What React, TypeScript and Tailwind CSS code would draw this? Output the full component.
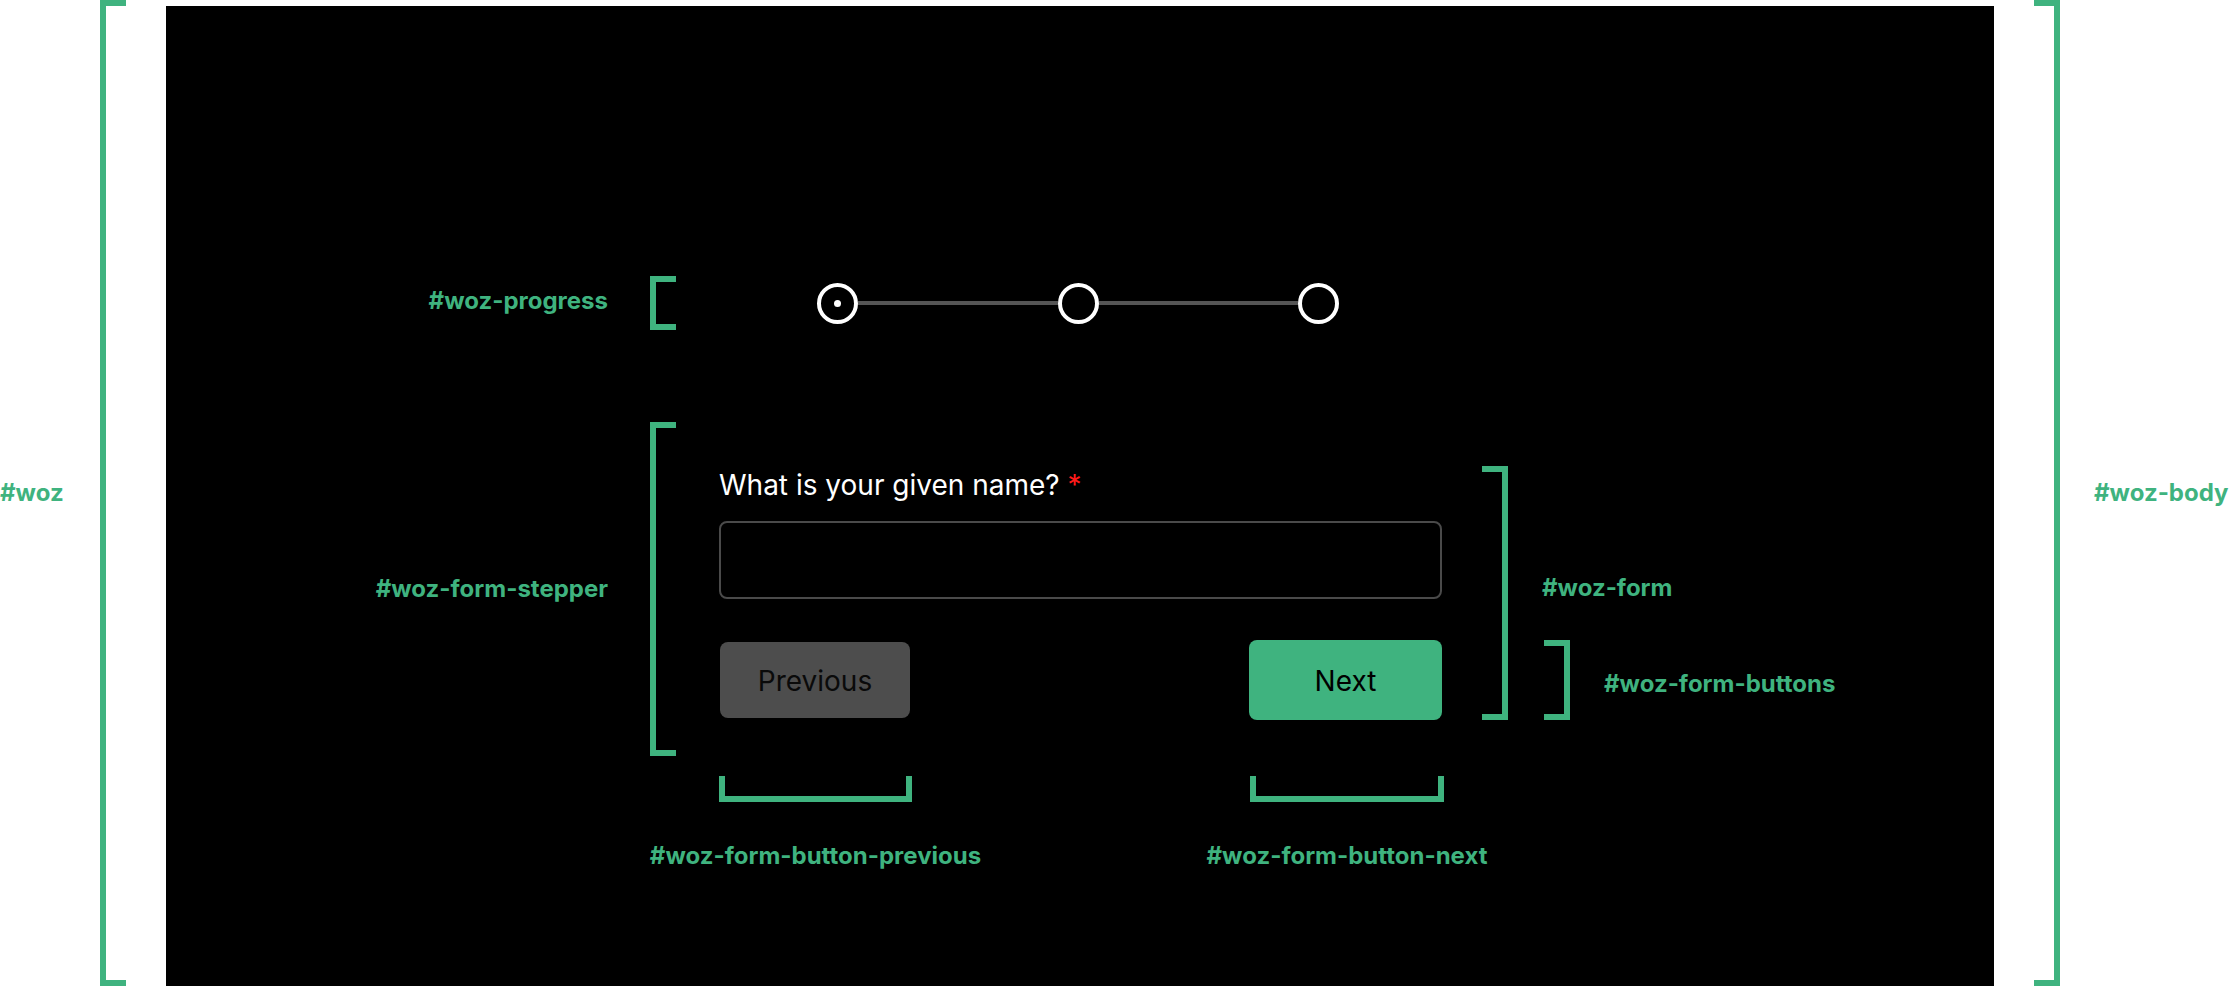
import React from 'react';

const tag = 'font-bold text-[24px] leading-[30px] text-[#3fb37f] whitespace-nowrap';

function Step({ active }: { active?: boolean }) {
  return (
    <div className="flex h-[41px] w-[41px] shrink-0 items-center justify-center rounded-full border-4 border-white">
      {active && <div className="h-[7px] w-[7px] rounded-full bg-white" />}
    </div>
  );
}

export default function App() {
  return (
    <div
      className="flex h-[986px] w-[2229px] overflow-hidden bg-white"
      style={{ fontFamily: 'Inter, "Noto Sans", sans-serif' }}
    >
      {/* #woz */}
      <div className="flex w-[100px] shrink-0 items-center">
        <span className={tag}>#woz</span>
      </div>
      <div className="w-[26px] shrink-0 border-y-[6px] border-l-[6px] border-[#3fb37f]" />

      {/* #woz-body panel */}
      <div className="ml-[40px] mt-[6px] flex w-[1828px] shrink-0 flex-col bg-black pt-[270px]">
        {/* progress */}
        <div className="flex h-[54px] items-center">
          <div className="mb-[5px] w-[442px] text-right">
            <span className={tag}>#woz-progress</span>
          </div>
          <div className="ml-[42px] h-[54px] w-[26px] border-y-[6px] border-l-[6px] border-[#3fb37f]" />
          <div className="ml-[43px] flex w-[723px] items-center pl-[98px] pr-[103px]">
            <Step active />
            <div className="h-[4px] flex-1 bg-[#555555]" />
            <Step />
            <div className="h-[4px] flex-1 bg-[#555555]" />
            <Step />
          </div>
        </div>

        {/* stepper */}
        <div className="mt-[92px] flex items-start">
          <div className="flex h-[334px] w-[442px] items-center justify-end">
            <span className={tag}>#woz-form-stepper</span>
          </div>
          <div className="ml-[42px] h-[334px] w-[26px] border-y-[6px] border-l-[6px] border-[#3fb37f]" />

          {/* form */}
          <div className="ml-[43px] mt-[44px] flex w-[723px] flex-col">
            <label className="pt-[2px] text-[28px] leading-[34px] text-white">
              What is your given name? <span className="text-[#ff1a1a]">*</span>
            </label>
            <input
              type="text"
              className="mt-[19px] h-[78px] w-full rounded-[8px] border-2 border-[#4a4a4a] bg-black px-4 text-[28px] text-white outline-none"
            />
            <div className="mt-[41px] flex h-[80px] items-center justify-between">
              <button className="ml-px h-[76px] w-[190px] rounded-[8px] bg-[#4d4d4d] pt-[2px] text-[28px] text-[#0a0a0a]">
                Previous
              </button>
              <button className="h-[80px] w-[193px] rounded-[8px] bg-[#3fb37f] pt-[2px] text-[28px] text-black">
                Next
              </button>
            </div>
          </div>

          <div className="ml-[40px] mt-[44px] h-[254px] w-[26px] border-y-[6px] border-r-[6px] border-[#3fb37f]" />

          <div className="ml-[34px] mt-[44px] flex flex-col">
            <span className={`mt-[107px] ${tag}`}>#woz-form</span>
            <div className="mt-[37px] flex h-[80px] items-center">
              <div className="ml-[2px] h-[80px] w-[26px] border-y-[6px] border-r-[6px] border-[#3fb37f]" />
              <span className={`ml-[34px] pt-[8px] ${tag}`}>#woz-form-buttons</span>
            </div>
          </div>
        </div>

        {/* button markers */}
        <div className="ml-[553px] mt-[20px] flex w-[725px] justify-between">
          <div className="flex w-[193px] flex-col items-center">
            <div className="h-[26px] w-full border-x-[6px] border-b-[6px] border-[#3fb37f]" />
            <span className={`mt-[39px] ${tag}`}>#woz-form-button-previous</span>
          </div>
          <div className="flex w-[194px] flex-col items-center">
            <div className="h-[26px] w-full border-x-[6px] border-b-[6px] border-[#3fb37f]" />
            <span className={`mt-[39px] ${tag}`}>#woz-form-button-next</span>
          </div>
        </div>
      </div>

      <div className="ml-[40px] w-[26px] shrink-0 border-y-[6px] border-r-[6px] border-[#3fb37f]" />
      <div className="ml-[34px] flex shrink-0 items-center">
        <span className={tag}>#woz-body</span>
      </div>
    </div>
  );
}
